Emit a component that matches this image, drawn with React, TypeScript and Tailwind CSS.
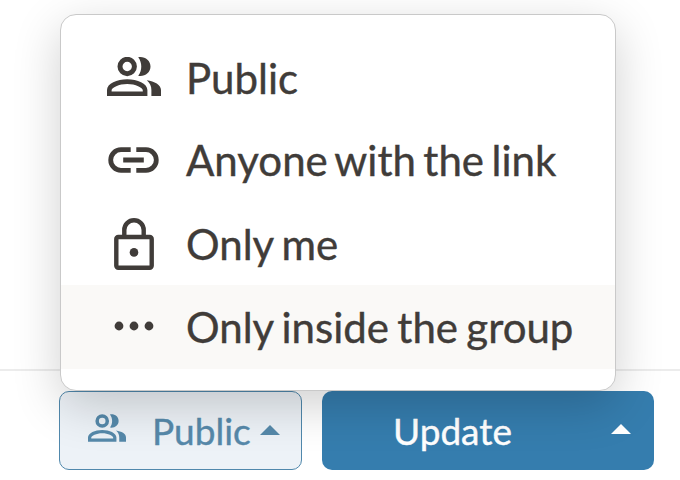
import React from "react";

function PeopleIcon({ className }: { className: string }) {
  return (
    <svg viewBox="0 0 54 39" className={className} fill="currentColor">
      <circle cx="20.2" cy="9.5" r="7.2" fill="none" stroke="currentColor" strokeWidth="5" />
      <path d="M31.2 0.2C37.7-.9 43.5 3.2 43.5 9.5S37.7 19.9 31.2 18.8C35.3 13.5 35.3 5.5 31.2.2Z" />
      <path
        fillRule="evenodd"
        d="M0 39V33C0 26.5 10 22.2 20.2 22.2S40.4 26.5 40.4 33V39ZM4.6 34.4H35.8V33.4C35.8 30.6 28.5 27 20.2 27S4.6 30.6 4.6 33.4Z"
      />
      <path d="M39.8 23.2C47.5 24.4 54 27.6 54 33V39H44.4V33C44.4 29 43 26 39.8 23.2Z" />
    </svg>
  );
}

function LinkIcon() {
  return (
    <svg viewBox="0 0 51 26" className="mr-px mb-[2px] h-[26px] w-[51px]" fill="none" stroke="currentColor" strokeWidth="4.8">
      <path d="M22.7 2.7H13A10.3 10.3 0 0 0 13 23.3H22.7M28.3 2.7H38A10.3 10.3 0 0 1 38 23.3H28.3M15.2 13H35.8" />
    </svg>
  );
}

function LockIcon() {
  return (
    <svg viewBox="0 0 40 52" className="mr-px h-[52px] w-[40px]" fill="none" stroke="currentColor" strokeWidth="4.4">
      <rect x="2.3" y="19" width="35.4" height="30.7" rx="2" />
      <path d="M10.3 18V12A9.7 9.7 0 0 1 29.7 12V18" />
      <circle cx="20" cy="34.4" r="4.3" fill="currentColor" stroke="none" />
    </svg>
  );
}

function DotsIcon() {
  return (
    <svg viewBox="0 0 40 10" className="mr-px mb-[2px] h-[10px] w-[40px]" fill="currentColor">
      <circle cx="5" cy="5" r="4.4" />
      <circle cx="20" cy="5" r="4.4" />
      <circle cx="35" cy="5" r="4.4" />
    </svg>
  );
}

function Caret() {
  return (
    <svg viewBox="0 0 20 10" className="h-[10px] w-[20px] shrink-0" fill="currentColor">
      <path d="M0 10 10 0 20 10Z" />
    </svg>
  );
}

const options = [
  { label: "Public", icon: <PeopleIcon className="mb-[2px] h-[39px] w-[54px]" />, active: false, text: "" },
  { label: "Anyone with the link", icon: <LinkIcon />, active: false, text: "mb-[2px] [word-spacing:-3.3px]" },
  { label: "Only me", icon: <LockIcon />, active: false, text: "[word-spacing:-2.4px]" },
  { label: "Only inside the group", icon: <DotsIcon />, active: true, text: "mb-px [word-spacing:-2.4px]" },
];

export default function App() {
  return (
    <div className="relative flex h-[480px] w-[680px] flex-col overflow-hidden bg-white font-['Lato',sans-serif] text-[#403c39] [-webkit-text-stroke:0.4px_currentColor]">
      <div className="h-[369px]" />
      <div className="flex flex-1 items-start gap-5 border-t-2 border-[#ececec] pt-5 pl-[59px]">
        <button className="flex h-[79px] w-[243px] items-center rounded-[10px] border-[1.5px] border-[#5088ac] bg-[#edf2f7] pl-[28px] text-[#5689aa]">
          <PeopleIcon className="mb-[5px] h-[28px] w-[38px]" />
          <span className="mb-px ml-[26px] text-[37px] leading-none">Public</span>
          <span className="mb-[2px] ml-[9px]"><Caret /></span>
        </button>
        <button className="flex h-[79px] w-[332px] items-center rounded-[10px] bg-[#357dae] text-white">
          <span className="mb-px ml-[71px] flex-1 text-left text-[37px] leading-none">Update</span>
          <span className="mr-[23px] mb-[4px]"><Caret /></span>
        </button>
      </div>
      <div className="absolute top-[14px] left-[60px] h-[377px] w-[556px] rounded-[16px] border-[1.5px] border-[#c9c9c9] bg-white pt-[21px] shadow-[0_14px_48px_rgba(0,0,0,0.19)]">
        {options.map((o) => (
          <div key={o.label} className={o.active ? "flex h-[84px] items-center bg-[#faf9f7]" : "flex h-[83px] items-center"}>
            <span className="ml-[46px] flex w-[54px] justify-center">{o.icon}</span>
            <span className={`ml-[25px] text-[42px] leading-none whitespace-nowrap ${o.text}`}>{o.label}</span>
          </div>
        ))}
      </div>
    </div>
  );
}
